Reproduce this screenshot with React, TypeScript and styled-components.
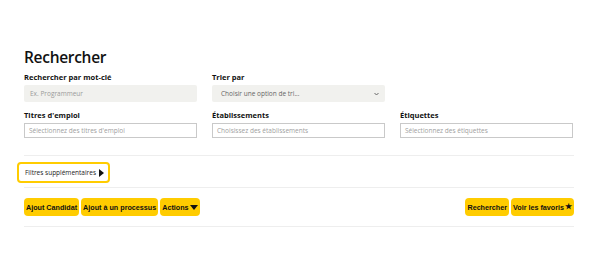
import React from "react";
import styled, { createGlobalStyle } from "styled-components";

const Global = createGlobalStyle`
  html, body { margin: 0; padding: 0; background: #fff; }
  body { font-family: "Open Sans", "Noto Sans", Arial, sans-serif; color: #111; }
  * { box-sizing: border-box; }
`;

const Page = styled.div`
  width: 601px;
  padding: 46px 0 0 24px;
`;

const Container = styled.div`
  width: 550px;
`;

const Title = styled.h1`
  margin: 0 0 4px 0;
  font-size: 15.5px;
  font-weight: 600;
  letter-spacing: -0.3px;
  line-height: 22px;
  color: #111;
`;

const Grid = styled.div`
  display: grid;
  grid-template-columns: 173px 173px 173px;
  column-gap: 15px;
  row-gap: 8px;
`;

const Field = styled.div`
  display: flex;
  flex-direction: column;
  gap: 3px;
`;

const Label = styled.label`
  font-size: 7.5px;
  font-weight: 700;
  line-height: 10px;
  color: #111;
`;

const TextInput = styled.div<{ $filled?: boolean }>`
  height: ${(p) => (p.$filled ? "17px" : "15px")};
  display: flex;
  align-items: center;
  justify-content: space-between;
  padding: 0 ${(p) => (p.$filled ? "6px" : "4px")};
  font-size: 6.5px;
  color: ${(p) => (p.$filled ? "#9a9a9a" : "#a0a0a0")};
  background: ${(p) => (p.$filled ? "#f1f1ee" : "#fff")};
  border: ${(p) => (p.$filled ? "none" : "1px solid #c9c9c9")};
  border-radius: ${(p) => (p.$filled ? "2px" : "0")};
`;

const SelectText = styled.span`
  color: #666;
  font-size: 6.5px;
  padding-left: 3px;
`;

const Chevron = styled.svg`
  width: 5px;
  height: 4px;
`;

const Spacer = styled.div`
  height: 17px;
`;

const Divider = styled.hr`
  border: none;
  border-top: 1px solid #eeeeee;
  margin: 0;
  width: 550px;
`;

const FilterRow = styled.div`
  display: flex;
  padding: 6px 0 4px 0;
  margin-left: -7px;
`;

const FilterButton = styled.button`
  display: inline-flex;
  align-items: center;
  gap: 3px;
  height: 21px;
  padding: 0 4px 0 6px;
  background: #fff;
  border: 2px solid #ffcc00;
  border-radius: 4px;
  font-family: "Open Sans", Arial, sans-serif;
  font-size: 6.5px;
  color: #222;
`;

const Tri = styled.span`
  width: 0;
  height: 0;
  border-top: 4px solid transparent;
  border-bottom: 4px solid transparent;
  border-left: 5px solid #111;
`;

const Actions = styled.div`
  display: flex;
  justify-content: space-between;
  align-items: center;
  padding: 10px 0 10px 0;
  width: 550px;
`;

const Group = styled.div`
  display: flex;
  gap: 2px;
`;

const YButton = styled.button`
  display: inline-flex;
  align-items: center;
  height: 18px;
  padding: 0 2px;
  background: #ffcc00;
  border: none;
  border-radius: 4px;
  font-family: "Liberation Sans", Arial, sans-serif;
  font-weight: 700;
  font-size: 7.2px;
  color: #111;
  gap: 1px;
`;

const Small = styled.span`
  font-size: 8px;
  line-height: 1;
`;

export default function App() {
  return (
    <Page>
      <Global />
      <Container>
        <Title>Rechercher</Title>
        <Grid>
          <Field>
            <Label>Rechercher par mot-clé</Label>
            <TextInput $filled>Ex. Programmeur</TextInput>
          </Field>
          <Field>
            <Label>Trier par</Label>
            <TextInput $filled>
              <SelectText>Choisir une option de tri...</SelectText>
              <Chevron viewBox="0 0 10 8">
                <path d="M1 2 L5 6 L9 2" stroke="#666" strokeWidth="2" fill="none" />
              </Chevron>
            </TextInput>
          </Field>
          <div />
          <Field>
            <Label>Titres d'emploi</Label>
            <TextInput>Sélectionnez des titres d'emploi</TextInput>
          </Field>
          <Field>
            <Label>Établissements</Label>
            <TextInput>Choisissez des établissements</TextInput>
          </Field>
          <Field>
            <Label>Étiquettes</Label>
            <TextInput>Sélectionnez des étiquettes</TextInput>
          </Field>
        </Grid>
        <Spacer />
        <Divider />
        <FilterRow>
          <FilterButton>
            Filtres supplémentaires <Tri />
          </FilterButton>
        </FilterRow>
        <Divider />
        <Actions>
          <Group>
            <YButton>Ajout Candidat</YButton>
            <YButton>Ajout à un processus</YButton>
            <YButton>
              Actions
              <Chevron viewBox="0 0 10 6" style={{ width: 8, height: 5 }}>
                <path d="M0 0 L10 0 L5 6 Z" fill="#111" />
              </Chevron>
            </YButton>
          </Group>
          <Group>
            <YButton>Rechercher</YButton>
            <YButton>
              Voir les favoris <Small>★</Small>
            </YButton>
          </Group>
        </Actions>
        <Divider />
      </Container>
    </Page>
  );
}
